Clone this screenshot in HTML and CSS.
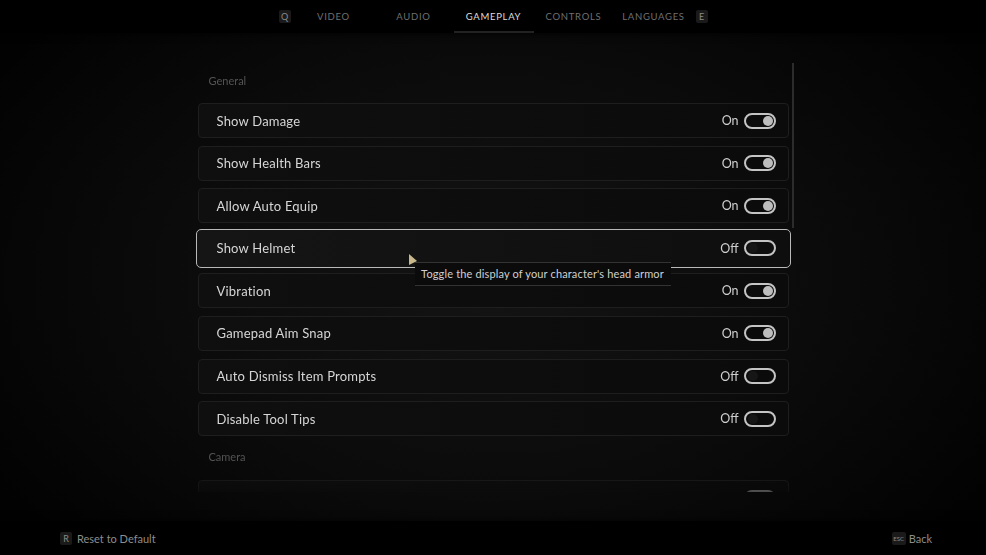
FILE: index.html
```html
<!DOCTYPE html>
<html lang="en">
<head>
  <meta charset="UTF-8" />
  <title>Settings</title>
  <link rel="stylesheet" href="styles.css">
</head>
<body>
  <header class="tabs">
    <span class="key">Q</span>
    <span class="tab">VIDEO</span>
    <span class="tab">AUDIO</span>
    <span class="tab active">GAMEPLAY</span>
    <span class="tab">CONTROLS</span>
    <span class="tab">LANGUAGES</span>
    <span class="key">E</span>
  </header>

  <main class="page">
    <div class="list">
      <div class="group">General</div>

      <div class="row"><span class="name">Show Damage</span><span class="val">On</span><span class="toggle on"></span></div>
      <div class="row"><span class="name">Show Health Bars</span><span class="val">On</span><span class="toggle on"></span></div>
      <div class="row"><span class="name">Allow Auto Equip</span><span class="val">On</span><span class="toggle on"></span></div>
      <div class="row selected">
        <span class="name">Show Helmet</span><span class="val">Off</span><span class="toggle"></span>
        <svg class="cursor" width="10" height="14" viewBox="0 0 10 14"><path d="M1 1 L1 12 L9 8 Z" fill="#c8b88c"/></svg>
        <div class="tip">Toggle the display of your character's head armor</div>
      </div>
      <div class="row"><span class="name">Vibration</span><span class="val">On</span><span class="toggle on"></span></div>
      <div class="row"><span class="name">Gamepad Aim Snap</span><span class="val">On</span><span class="toggle on"></span></div>
      <div class="row"><span class="name">Auto Dismiss Item Prompts</span><span class="val">Off</span><span class="toggle"></span></div>
      <div class="row"><span class="name">Disable Tool Tips</span><span class="val">Off</span><span class="toggle"></span></div>

      <div class="group camera">Camera</div>
      <div class="row"><span class="name"></span><span class="val"></span><span class="toggle"></span></div>
    </div>
    <div class="scrollbar"></div>
  </main>

  <footer class="foot">
    <div class="hint"><span class="key">R</span>Reset to Default</div>
    <div class="hint"><span class="key esc">ESC</span>Back</div>
  </footer>
</body>
</html>
```

FILE: styles.css
```css
* {
  box-sizing: border-box;
}

html, body {
  height: 100%;
}

body {
  margin: 0;
  font-family: 'Lato', 'Open Sans', sans-serif;
  color: #d2d2d2;
  background: radial-gradient(ellipse 60% 70% at 50% 50%, #141414 0%, #0b0b0b 55%, #020202 100%);
  display: flex;
  flex-direction: column;
  overflow: hidden;
}

.tabs {
  height: 33px;
  background: #000;
  display: flex;
  justify-content: center;
  align-items: center;
  flex-shrink: 0;
  box-shadow: 0 2px 6px rgba(0, 0, 0, 0.6);
}

.tab {
  width: 80px;
  height: 33px;
  line-height: 34px;
  text-align: center;
  font-size: 9.5px;
  letter-spacing: 0.7px;
  color: #6f6f6f;
  border-bottom: 2px solid transparent;
}

.tab.active {
  color: #dcdcdc;
  border-bottom-color: #222;
}

.key {
  display: inline-block;
  width: 12px;
  height: 13px;
  line-height: 13px;
  text-align: center;
  font-size: 9px;
  color: #8a8a8a;
  background: #1a1a1a;
  border-radius: 2px;
}

.tabs .key:first-child {
  margin-right: 3px;
}

.tabs .key:last-child {
  margin-left: 2px;
}

.page {
  flex: 1;
  position: relative;
  display: flex;
  justify-content: center;
}

.list {
  width: 595px;
  height: 459px;
  padding: 41px 2px 0;
  overflow: hidden;
  -webkit-mask-image: linear-gradient(to bottom, #000 calc(100% - 24px), rgba(0, 0, 0, 0.35) 100%);
  mask-image: linear-gradient(to bottom, #000 calc(100% - 24px), rgba(0, 0, 0, 0.35) 100%);
}

.group {
  font-size: 11px;
  line-height: 14px;
  color: #545454;
  padding-left: 11px;
  margin-bottom: 15px;
}

.group.camera {
  margin-top: 14px;
  margin-bottom: 16px;
}

.row {
  position: relative;
  height: 35px;
  margin-bottom: 7.6px;
  display: flex;
  align-items: center;
  padding: 0 12px 0 18px;
  background: linear-gradient(to right, #0f0f0f, #0b0b0b);
  border: 1px solid #1e1e1e;
  border-radius: 4px;
}

.row.selected {
  margin: -2px -2px 5.6px;
  height: 39px;
  padding: 0 14px 0 20px;
  border: 1px solid #b9b9b9;
  border-radius: 5px;
  background: linear-gradient(to right, #151515, #0e0e0e);
}

.name {
  flex: 1;
  font-size: 13px;
  letter-spacing: 0.2px;
  color: #d6d6d6;
}

.val {
  font-size: 12.5px;
  color: #cfcfcf;
  margin-right: 5px;
}

.toggle {
  position: relative;
  width: 32px;
  height: 16px;
  border: 2px solid #c4c4c4;
  border-radius: 8px;
}

.toggle::after {
  content: "";
  position: absolute;
  top: 1px;
  left: 2px;
  width: 10px;
  height: 10px;
  border-radius: 50%;
  background: #161616;
}

.toggle.on::after {
  left: auto;
  right: 1px;
  background: #bdbdbd;
}

.cursor {
  position: absolute;
  left: 211px;
  top: 23px;
}

.tip {
  position: absolute;
  left: 218px;
  top: 32px;
  z-index: 2;
  width: 256px;
  height: 24px;
  line-height: 22px;
  text-align: center;
  font-size: 11px;
  letter-spacing: 0.15px;
  color: #d0d0d0;
  background: #0b0b0b;
  border-top: 1px solid #333;
  border-bottom: 1px solid #333;
}

.scrollbar {
  position: absolute;
  left: 792px;
  top: 30px;
  width: 2px;
  height: 165px;
  background: #2c2c2c;
}

.foot {
  height: 34px;
  background: #000;
  flex-shrink: 0;
  display: flex;
  justify-content: space-between;
  align-items: center;
  padding: 0 54px 0 60px;
  box-shadow: 0 -2px 6px rgba(0, 0, 0, 0.5);
}

.hint {
  font-size: 11px;
  color: #8d8d8d;
  display: flex;
  align-items: center;
}

.hint .key {
  margin-right: 5px;
}

.hint .key.esc {
  width: 14px;
  font-size: 6px;
  margin-right: 3px;
}
```
